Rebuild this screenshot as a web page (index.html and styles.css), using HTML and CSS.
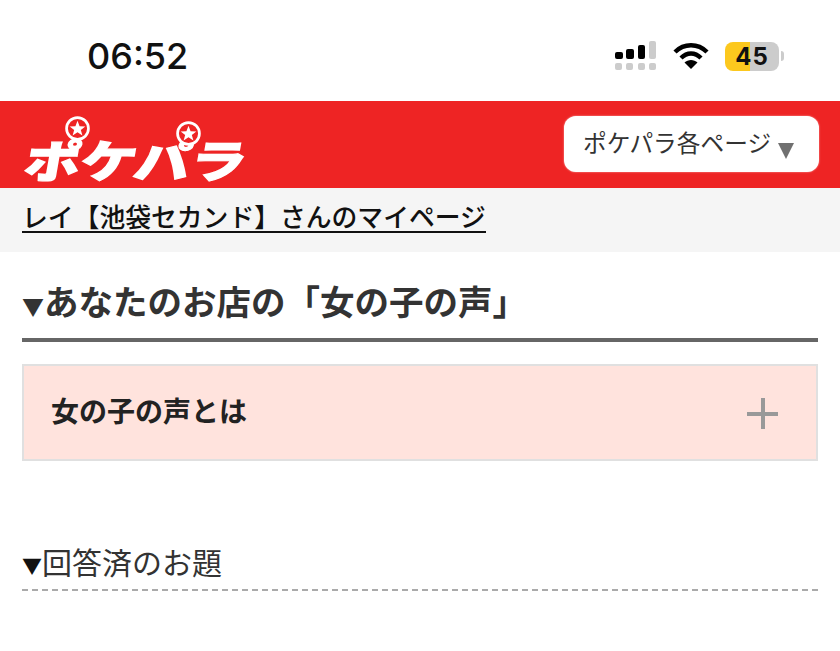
FILE: index.html
```html
<!DOCTYPE html>
<html lang="ja">
<head>
<meta charset="UTF-8">
<meta name="viewport" content="width=device-width, initial-scale=1.0">
<title>ポケパラ マイページ</title>
<link rel="stylesheet" href="styles.css">
</head>
<body>

<div class="status-bar">
    <div class="clock">06:52</div>
    <div class="status-icons">
        <svg class="signal" width="44" height="30" viewBox="0 0 44 30">
            <rect x="1" y="11" width="8" height="7" rx="2" fill="#000"/>
            <rect x="12" y="8" width="8" height="10" rx="2" fill="#000"/>
            <rect x="24" y="4" width="7" height="14" rx="2" fill="#000"/>
            <rect x="35" y="0" width="7" height="18" rx="2" fill="#ccc"/>
            <rect x="1" y="22" width="7" height="7" rx="2" fill="#ccc"/>
            <rect x="12" y="22" width="7" height="7" rx="2" fill="#ccc"/>
            <rect x="24" y="22" width="7" height="7" rx="2" fill="#ccc"/>
            <rect x="35" y="22" width="7" height="7" rx="2" fill="#ccc"/>
        </svg>
        <svg class="wifi" width="36" height="28" viewBox="0 0 36 28">
            <path d="M2 10 C11 1 25 1 34 10" fill="none" stroke="#000" stroke-width="4.4"/>
            <path d="M8 16 C14 10 22 10 28 16" fill="none" stroke="#000" stroke-width="4.4"/>
            <path d="M11.5 20.5 C15 17 21 17 24.5 20.5 L18 27 Z" fill="#000"/>
        </svg>
        <div class="battery"><span class="battery-level">45</span></div>
        <div class="battery-cap"></div>
    </div>
</div>

<header class="site-header">
    <div class="logo">
        <span class="logo-text">ポケパラ</span>
        <svg class="logo-star star-one" width="25" height="25" viewBox="0 0 24 24">
            <circle cx="12" cy="12" r="10.5" fill="#ee2424" stroke="#fff" stroke-width="2.6"/>
            <path d="M12 4.5 L14 9.8 L19.5 10 L15.2 13.4 L16.7 18.8 L12 15.7 L7.3 18.8 L8.8 13.4 L4.5 10 L10 9.8 Z" fill="#fff"/>
        </svg>
        <svg class="logo-star star-two" width="25" height="25" viewBox="0 0 24 24">
            <circle cx="12" cy="12" r="10.5" fill="#ee2424" stroke="#fff" stroke-width="2.6"/>
            <path d="M12 4.5 L14 9.8 L19.5 10 L15.2 13.4 L16.7 18.8 L12 15.7 L7.3 18.8 L8.8 13.4 L4.5 10 L10 9.8 Z" fill="#fff"/>
        </svg>
    </div>
    <div class="page-menu">
        <span class="menu-label">ポケパラ各ページ</span>
        <span class="menu-arrow"></span>
    </div>
</header>

<div class="user-bar">
    <a href="#">レイ【池袋セカンド】さんのマイページ</a>
</div>

<main class="content">
    <h1 class="page-title"><span class="title-mark">▼</span>あなたのお店の「女の子の声」</h1>

    <div class="accordion">
        <span class="accordion-label">女の子の声とは</span>
        <span class="plus"></span>
    </div>

    <h2 class="sub-title"><span class="sub-mark">▼</span>回答済のお題</h2>
</main>

</body>
</html>
```

FILE: styles.css
```css
body {
    margin: 0;
    background: #fff;
    color: #222;
    font-family: "Noto Sans CJK JP", "Noto Sans", sans-serif;
}

/* status bar */
.status-bar {
    height: 101px;
    display: flex;
    justify-content: space-between;
    align-items: flex-start;
    padding: 0 56px 0 87px;
    box-sizing: border-box;
}
.clock {
    margin-top: 34px;
    font-family: Inter, "Liberation Sans", sans-serif;
    font-size: 36px;
    line-height: 44px;
    font-weight: 500;
    color: #111;
}
.status-icons {
    display: flex;
    align-items: center;
    margin-top: 41px;
}
.signal {
    margin-right: 15px;
}
.wifi {
    margin-right: 16px;
}
.battery {
    width: 54px;
    height: 29px;
    border-radius: 8px;
    background: linear-gradient(to right, #fcc81e 0, #fcc81e 46%, #ccc 46%, #ccc 100%);
    text-align: center;
}
.battery-level {
    font-family: Inter, "Liberation Sans", sans-serif;
    font-size: 24px;
    line-height: 29px;
    font-weight: 700;
    letter-spacing: 1px;
    color: #111;
    display: block;
}
.battery-cap {
    width: 3px;
    height: 10px;
    margin-left: 2px;
    background: #ccc;
    border-radius: 0 3px 3px 0;
}

/* red header */
.site-header {
    height: 87px;
    background: #ee2424;
    display: flex;
    justify-content: space-between;
    align-items: center;
    padding: 0 21px 0 22px;
}
.logo {
    position: relative;
    width: 225px;
    height: 60px;
}
.logo-text {
    display: block;
    margin-top: 14px;
    font-size: 56px;
    line-height: 50px;
    font-weight: 900;
    color: #fff;
    -webkit-text-stroke: 1.5px #fff;
    transform: skewX(-10deg) scaleY(0.8);
    transform-origin: left bottom;
    white-space: nowrap;
}
.logo-star {
    position: absolute;
}
.star-one {
    left: 43px;
    top: 1px;
}
.star-two {
    left: 154px;
    top: 6px;
}
.page-menu {
    width: 255px;
    height: 56px;
    margin-top: -2px;
    box-sizing: border-box;
    background: #fff;
    border-radius: 12px;
    box-shadow: 0 0 2px #f9b0b0;
    display: flex;
    align-items: center;
    padding-left: 19px;
    font-size: 23.7px;
    color: #333;
}
.menu-label {
    margin-bottom: 3px;
}
.menu-arrow {
    width: 0;
    height: 0;
    margin: 14px 0 0 7px;
    border-left: 8px solid transparent;
    border-right: 8px solid transparent;
    border-top: 16px solid #707070;
}

/* user name bar */
.user-bar {
    height: 64px;
    box-sizing: border-box;
    background: #f5f5f5;
    padding: 10px 22px 0;
    font-size: 25.8px;
    line-height: 36px;
    font-weight: 500;
}
.user-bar a {
    color: #111;
    text-decoration: none;
    border-bottom: 2px solid #111;
    display: inline-block;
    line-height: 30px;
    padding-top: 2px;
}

.content {
    padding: 0 22px;
}
.page-title {
    margin: 27px 0 0;
    padding-bottom: 12px;
    border-bottom: 4px solid #666;
    font-size: 34.5px;
    line-height: 42px;
    font-weight: 700;
    color: #333;
}
.title-mark {
    font-size: 22px;
}
.accordion {
    margin-top: 22px;
    height: 97px;
    box-sizing: border-box;
    background: #ffe3dd;
    border: 2px solid #e0e0e0;
    display: flex;
    justify-content: space-between;
    align-items: center;
    padding: 0 38px 0 27px;
    font-size: 28px;
    font-weight: 700;
    color: #222;
}
.accordion-label {
    margin-bottom: 6px;
}
.plus {
    width: 31px;
    height: 31px;
    margin-top: 2px;
    background:
        linear-gradient(#999, #999) center / 100% 4px no-repeat,
        linear-gradient(#999, #999) center / 4px 100% no-repeat;
}
.sub-title {
    margin: 80px 0 0;
    padding-bottom: 3px;
    border-bottom: 2px dashed #aaa;
    font-size: 30px;
    line-height: 40px;
    font-weight: 400;
    color: #333;
}
.sub-mark {
    font-size: 20px;
    color: #111;
}
```
